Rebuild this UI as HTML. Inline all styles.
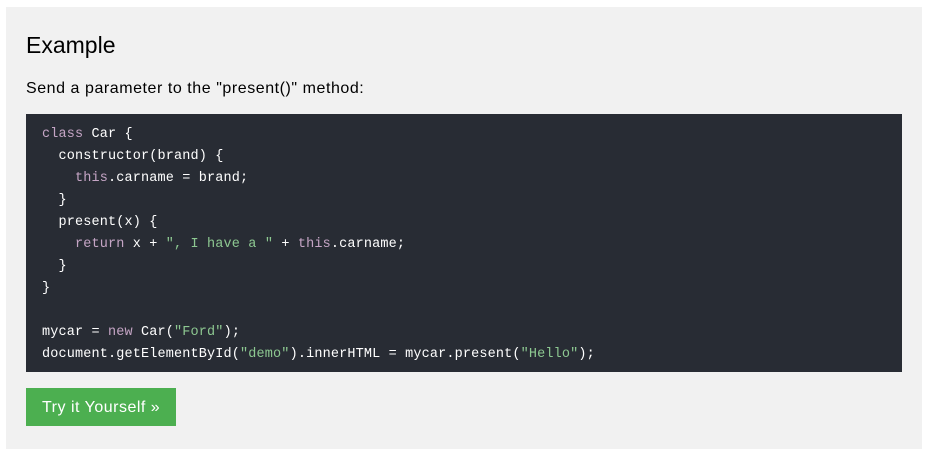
<!DOCTYPE html>
<html><head><style>
body{margin:0;background:#fff;width:932px;height:456px;overflow:hidden;font-family:"Liberation Sans",sans-serif}
.box{position:absolute;left:6px;top:7px;width:916px;height:442px;background:#f1f1f1}
h2{position:absolute;left:20px;top:23px;margin:0;font-weight:normal;font-size:23px;color:#000;line-height:30px}
p{position:absolute;left:20px;top:72px;margin:0;font-size:16px;letter-spacing:0.55px;color:#000;line-height:20px}
pre{position:absolute;left:20px;top:107px;width:876px;height:258px;margin:0;background:#282c34;color:#fff;font-family:"Liberation Mono",monospace;font-size:13.5px;letter-spacing:0.15px;line-height:22px;box-sizing:border-box;padding:10px 0 0 16px}
.k{color:#c5a5c5}.s{color:#8dc891}
.btn{position:absolute;left:20px;top:381px;width:150px;height:38px;background:#4caf50;color:#fff;font-size:16px;letter-spacing:0.5px;line-height:40px;box-sizing:border-box;padding-left:16px}
</style></head><body>
<div class="box">
<h2>Example</h2>
<p>Send a parameter to the "present()" method:</p>
<pre><span class="k">class</span> Car {
  constructor(brand) {
    <span class="k">this</span>.carname = brand;
  }
  present(x) {
    <span class="k">return</span> x + <span class="s">", I have a "</span> + <span class="k">this</span>.carname;
  }
}

mycar = <span class="k">new</span> Car(<span class="s">"Ford"</span>);
document.getElementById(<span class="s">"demo"</span>).innerHTML = mycar.present(<span class="s">"Hello"</span>);</pre>
<div class="btn">Try it Yourself »</div>
</div>
</body></html>
